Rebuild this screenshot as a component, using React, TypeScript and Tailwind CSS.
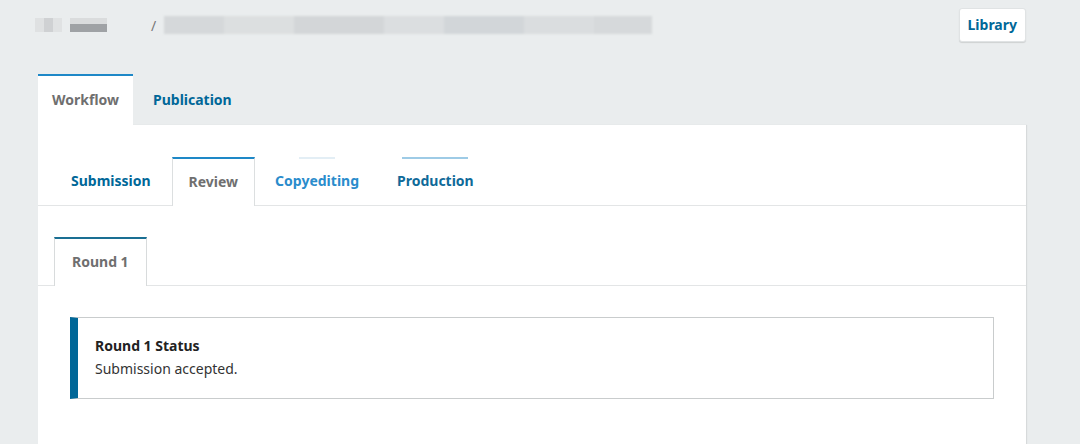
export default function App() {
  const subTabs = [
    { label: 'Submission', active: false, color: 'text-[#006798]', line: '', extra: '' },
    { label: 'Review', active: true, color: 'text-[#6f6f6f]', line: '', extra: '' },
    { label: 'Copyediting', active: false, color: 'text-[#2a8ccc]', line: 'w-[36px] bg-[#e3eef5]', extra: '' },
    { label: 'Production', active: false, color: 'text-[#0f6a99]', line: 'w-[66px] bg-[#9ecbe6]', extra: 'ml-[2px]' },
  ];

  return (
    <div className="min-h-screen h-[444px] overflow-hidden bg-[#eaedee] text-[14px] text-[#222]" style={{ fontFamily: '"Noto Sans", "Open Sans", sans-serif' }}>
      {/* Header */}
      <div className="flex items-center justify-between pl-[35px] pr-[54px] pt-[8px]">
        <div className="flex items-center gap-[8px] h-[34px]">
          {/* redacted breadcrumb */}
          <div className="flex h-[14px] w-[27px] blur-[0.6px]">
            <div className="w-[9px] bg-[#dfe1e2]" />
            <div className="w-[9px] bg-[#cfd1d3]" />
            <div className="w-[9px] bg-[#e0e2e3]" />
          </div>
          <div className="flex flex-col h-[14px] w-[37px] blur-[0.6px]">
            <div className="h-[6px] bg-[#dadcdd]" />
            <div className="h-[8px] bg-[#9fa2a5]" />
          </div>
          <span className="ml-[36px] text-[#777] text-[14px]">/</span>
          <div className="flex h-[18px] w-[488px] blur-[0.8px]">
            <div className="w-[60px] bg-[#d5d8da]" />
            <div className="w-[70px] bg-[#dcdfe0]" />
            <div className="w-[90px] bg-[#d3d6d8]" />
            <div className="w-[60px] bg-[#dbdee0]" />
            <div className="w-[80px] bg-[#d2d6d9]" />
            <div className="w-[70px] bg-[#dadddf]" />
            <div className="w-[58px] bg-[#d6d9db]" />
          </div>
        </div>
        <button className="h-[34px] px-[8px] pb-[2px] bg-white rounded-[3px] border border-[#e0e3e4] shadow-[0_1px_1px_rgba(0,0,0,0.12)] text-[#006798] font-bold text-[14px]">
          Library
        </button>
      </div>

      {/* Top tabs */}
      <div className="mt-[32px] ml-[38px] flex items-end h-[51px]">
        <div className="h-[51px] w-[95px] pb-[2px] bg-white border-t-2 border-[#1e88c7] flex items-center justify-center font-bold text-[#6f6f6f]">
          Workflow
        </div>
        <div className="h-[49px] pb-[2px] flex items-center pl-[20px] font-bold text-[#006798]">Publication</div>
      </div>

      {/* Panel */}
      <div className="ml-[38px] w-[988px] bg-white shadow-[1px_0_1px_rgba(0,0,0,0.08)] h-[320px]">
        {/* Sub tabs */}
        <div className="flex items-end gap-[4px] pl-[17px] pt-[32px] border-b border-[#e3e5e6] h-[81px]">
          {subTabs.map((t) => (
            <div
              key={t.label}
              className={`relative h-[48px] px-[16px] pb-[2px] flex items-center font-bold ${t.color} ${t.extra} ${
                t.active ? 'bg-white border-t-2 border-x border-t-[#1e88c7] border-x-[#dcdfe0] -mb-px h-[49px] ml-[1px]' : ''
              }`}
            >
              {t.line && <div className={`absolute top-0 left-1/2 -translate-x-1/2 h-[2px] ${t.line}`} />}
              {t.label}
            </div>
          ))}
        </div>

        {/* Round tabs */}
        <div className="flex items-end pl-[16px] pt-[31px] border-b border-[#e3e5e6] h-[80px]">
          <div className="h-[49px] -mb-px pb-[2px] px-[17px] flex items-center bg-white border-t-2 border-x border-t-[#1a6f93] border-x-[#d8dbdc] font-bold text-[#6f6f6f]">
            Round 1
          </div>
        </div>

        {/* Status */}
        <div className="px-[32px] pt-[31px]">
          <div className="h-[82px] pb-[2px] border border-[#c9cccd] border-l-[8px] border-l-[#006798] pl-[17px] flex flex-col justify-center">
            <div className="font-bold text-[#222] leading-[23px]">Round 1 Status</div>
            <div className="text-[#333] leading-[23px]">Submission accepted.</div>
          </div>
        </div>
      </div>
    </div>
  );
}
